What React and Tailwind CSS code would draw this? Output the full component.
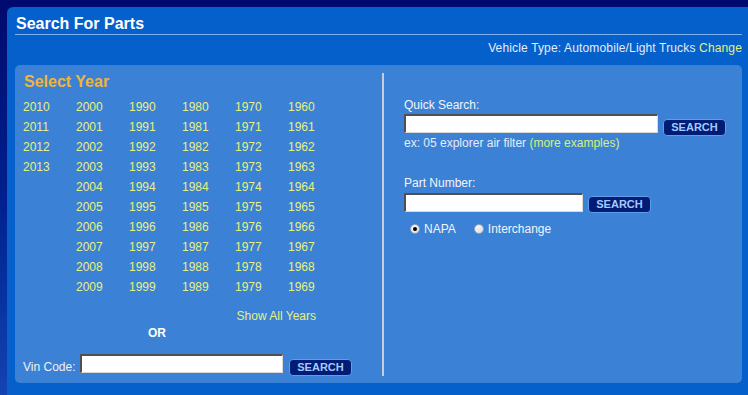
import React, { useState } from "react";

const COLUMNS = [
  [2010, 2011, 2012, 2013],
  [2000, 2001, 2002, 2003, 2004, 2005, 2006, 2007, 2008, 2009],
  [1990, 1991, 1992, 1993, 1994, 1995, 1996, 1997, 1998, 1999],
  [1980, 1981, 1982, 1983, 1984, 1985, 1986, 1987, 1988, 1989],
  [1970, 1971, 1972, 1973, 1974, 1975, 1976, 1977, 1978, 1979],
  [1960, 1961, 1962, 1963, 1964, 1965, 1966, 1967, 1968, 1969],
];

function SearchButton({ className = "" }) {
  return (
    <button
      className={`h-[17px] w-[63px] shrink-0 rounded-[4px] border border-[#5f9cec] bg-[#001c74] text-[11px] font-bold leading-[15px] text-[#a6caff] ${className}`}
    >
      SEARCH
    </button>
  );
}

function TextBox({ width }) {
  return (
    <input
      className={`h-[19px] ${width} shrink-0 border-t-2 border-l-2 border-b border-r border-t-[#505050] border-l-[#505050] border-b-[#d8d8d8] border-r-[#d8d8d8] bg-white px-1 text-[12px] text-black outline-none`}
    />
  );
}

function Radio({ checked, onClick, label }) {
  return (
    <label className="flex cursor-pointer items-center" onClick={onClick}>
      <span className="flex h-[10px] w-[10px] items-center justify-center rounded-full border border-[#9aa4b4] bg-gradient-to-br from-[#ffffff] to-[#d4d8e0]">
        {checked && <span className="h-[4px] w-[4px] rounded-full bg-black" />}
      </span>
      <span className="ml-[4px]">{label}</span>
    </label>
  );
}

export default function App() {
  const [type, setType] = useState("napa");

  return (
    <div
      className="h-[395px] w-[748px] overflow-hidden bg-gradient-to-b from-[#000a6e] via-[#00208e] to-[#1444b2] pl-[7px] pt-[7px]"
      style={{ fontFamily: '"Liberation Sans", Arial, sans-serif' }}
    >
      <div className="h-full rounded-tl-[6px] bg-[#0560cc] pl-[8px] pr-[6px] pt-[7px]">
        <h1 className="h-[21px] border-b border-[#7fb0f0] pl-[1px] text-[16px] font-bold leading-[20px] text-white">
          Search For Parts
        </h1>
        <div className="mt-[6px] h-[14px] text-right text-[12px] leading-[14px] tracking-[0.15px] text-[#e6ecf8]">
          Vehicle Type: Automobile/Light Trucks <a className="text-[#e4f07a]">Change</a>
        </div>

        <div className="mt-[10px] flex h-[318px] rounded-[5px] bg-[#3b82d6]">
          {/* year picker */}
          <div className="w-[367px] pl-[8px] pt-[7px]">
            <h2 className="h-[20px] pl-[1px] text-[16px] font-bold leading-[20px] text-[#f0b43a]">
              Select Year
            </h2>
            <div className="mt-[5px] flex text-[12px] leading-[20px] text-[#e8f080]">
              {COLUMNS.map((col, i) => (
                <div key={i} className="flex w-[53px] flex-col">
                  {col.map((y) => (
                    <a key={y} className="cursor-pointer">
                      {y}
                    </a>
                  ))}
                </div>
              ))}
            </div>
            <div className="mt-[9px] w-[293px] text-right text-[12px] leading-[20px] text-[#e8f080]">
              Show All Years
            </div>
            <div className="h-[14px] pl-[125px] text-[12px] font-bold leading-[14px] text-white">
              OR
            </div>
            <div className="mt-[14px] flex items-start text-[12px] text-[#f0f0f0]">
              <span className="mt-[6px] w-[57px] leading-[14px]">Vin Code:</span>
              <TextBox width="w-[203px]" />
              <SearchButton className="ml-[6px] mt-[5px]" />
            </div>
          </div>

          <div className="mt-[8px] h-[303px] w-[2px] bg-[#c8ccd6]" />

          {/* quick search */}
          <div className="flex-1 pl-[20px] pt-[33px] text-[12px] leading-[14px] text-[#f2f4f8]">
            <div>Quick Search:</div>
            <div className="mt-[2px] flex h-[22px] items-start">
              <TextBox width="w-[254px]" />
              <SearchButton className="ml-[5px] mt-[5px]" />
            </div>
            <div className="text-[#e6ecf8]">
              ex: 05 explorer air filter <a className="text-[#d8f07a]">(more examples)</a>
            </div>

            <div className="mt-[26px]">Part Number:</div>
            <div className="mt-[3px] flex items-start">
              <TextBox width="w-[179px]" />
              <SearchButton className="ml-[5px] mt-[3px]" />
            </div>
            <div className="mt-[9px] flex pl-[6px]">
              <Radio checked={type === "napa"} onClick={() => setType("napa")} label="NAPA" />
              <div className="ml-[18px]">
                <Radio
                  checked={type === "interchange"}
                  onClick={() => setType("interchange")}
                  label="Interchange"
                />
              </div>
            </div>
          </div>
        </div>
      </div>
    </div>
  );
}
